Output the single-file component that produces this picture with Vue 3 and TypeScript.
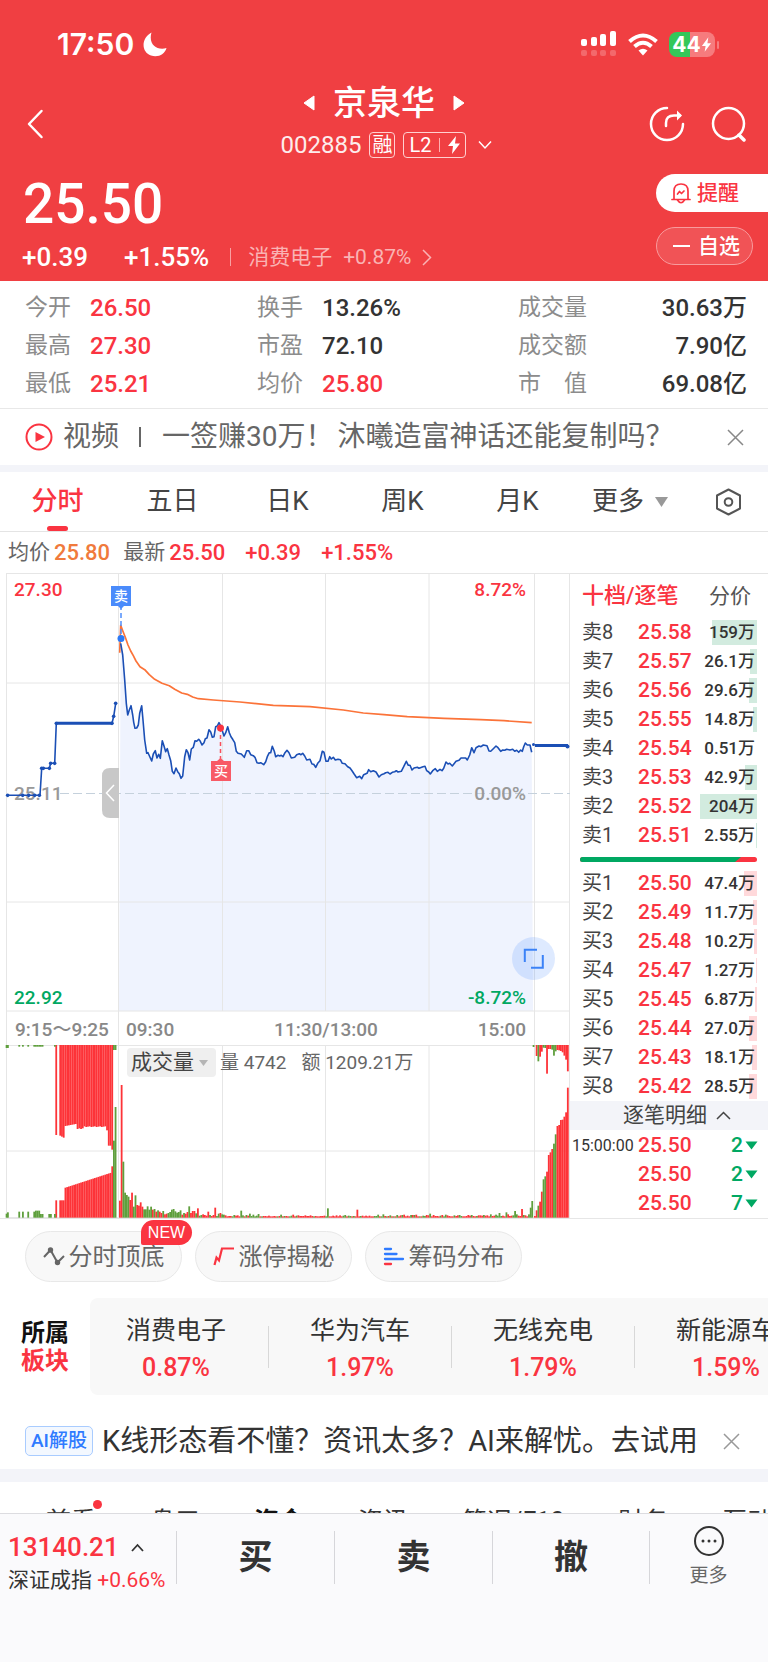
<script setup lang="ts">
import { ref } from 'vue'

type Point = [number, number]
type Tone = 'up' | 'down'

interface Stat { label: string; value: string; rise?: boolean }
interface Level { label: string; price: string; volume: string; bar: number }
interface Bar { x: number; y: number; h: number; tone: Tone }

const stats: Stat[] = [
  { label: '今开', value: '26.50', rise: true },
  { label: '换手', value: '13.26%' },
  { label: '成交量', value: '30.63万' },
  { label: '最高', value: '27.30', rise: true },
  { label: '市盈', value: '72.10' },
  { label: '成交额', value: '7.90亿' },
  { label: '最低', value: '25.21', rise: true },
  { label: '均价', value: '25.80', rise: true },
  { label: '市　值', value: '69.08亿' },
]

const periods = ['分时', '五日', '日K', '周K', '月K']
const activePeriod = ref('分时')

const asks: Level[] = [
  { label: '卖8', price: '25.58', volume: '159万', bar: 45 },
  { label: '卖7', price: '25.57', volume: '26.1万', bar: 7 },
  { label: '卖6', price: '25.56', volume: '29.6万', bar: 8 },
  { label: '卖5', price: '25.55', volume: '14.8万', bar: 4 },
  { label: '卖4', price: '25.54', volume: '0.51万', bar: 0 },
  { label: '卖3', price: '25.53', volume: '42.9万', bar: 12 },
  { label: '卖2', price: '25.52', volume: '204万', bar: 57 },
  { label: '卖1', price: '25.51', volume: '2.55万', bar: 1 },
]
const bids: Level[] = [
  { label: '买1', price: '25.50', volume: '47.4万', bar: 13 },
  { label: '买2', price: '25.49', volume: '11.7万', bar: 4 },
  { label: '买3', price: '25.48', volume: '10.2万', bar: 3 },
  { label: '买4', price: '25.47', volume: '1.27万', bar: 1 },
  { label: '买5', price: '25.45', volume: '6.87万', bar: 2 },
  { label: '买6', price: '25.44', volume: '27.0万', bar: 8 },
  { label: '买7', price: '25.43', volume: '18.1万', bar: 5 },
  { label: '买8', price: '25.42', volume: '28.5万', bar: 8 },
]
const trades = [
  { time: '15:00:00', price: '25.50', count: '2' },
  { time: '', price: '25.50', count: '2' },
  { time: '', price: '25.50', count: '7' },
]

const sectors = [
  { name: '消费电子', change: '0.87%' },
  { name: '华为汽车', change: '1.97%' },
  { name: '无线充电', change: '1.79%' },
  { name: '新能源车', change: '1.59%' },
]

const sections = ['首看', '盘口', '资金', '资讯', '简况/F10', '财务', '互动']

// Series are stored at three units per chart pixel.
const UNIT = 3
const OFFSET = 13

const toPoints = (list: Point[]): string =>
  list.map(([x, y]) => `${(x / UNIT).toFixed(1)},${(y / UNIT - OFFSET).toFixed(1)}`).join(' ')

const price: Point[] = [
  [362, 250], [368, 285], [374, 360], [379, 430], [383, 465], [388, 450], [393, 437], [398, 465], [401, 487],
  [405, 505], [410, 504], [415, 495], [419, 460], [425, 437], [429, 480], [434, 540], [440, 580], [444, 578],
  [450, 592], [455, 603], [460, 582], [466, 572], [471, 594], [476, 583], [481, 595], [487, 542], [492, 558],
  [497, 575], [502, 566], [507, 585], [512, 602], [517, 634], [522, 641], [528, 624], [533, 635], [538, 641],
  [543, 655], [548, 648], [554, 590], [559, 569], [564, 578], [569, 600], [574, 567], [580, 562], [585, 542],
  [590, 544], [596, 538], [601, 544], [606, 555], [612, 548], [616, 536], [621, 534], [627, 509], [632, 516],
  [637, 532], [642, 530], [647, 500], [652, 498], [657, 488], [662, 498], [667, 512], [672, 528], [677, 518],
  [683, 500], [688, 518], [693, 530], [698, 538], [704, 548], [709, 574], [714, 580], [724, 582], [733, 592],
  [740, 572], [746, 572], [752, 584], [760, 587], [765, 592], [771, 608], [777, 610], [782, 608], [791, 614],
  [797, 605], [802, 590], [808, 578], [812, 578], [817, 559], [823, 574], [827, 590], [834, 586], [839, 588],
  [844, 586], [849, 590], [855, 578], [861, 571], [867, 578], [874, 594], [884, 592], [890, 584], [898, 581],
  [903, 584], [908, 580], [914, 588], [920, 600], [930, 598], [936, 612], [941, 613], [947, 622], [953, 610],
  [960, 602], [967, 574], [972, 577], [978, 604], [984, 604], [989, 590], [994, 597], [1000, 592], [1006, 600],
  [1014, 598], [1021, 599], [1027, 610], [1035, 611], [1043, 620], [1050, 624], [1056, 632], [1063, 643],
  [1070, 653], [1079, 649], [1085, 656], [1091, 644], [1101, 640], [1106, 629], [1112, 635], [1120, 632],
  [1128, 636], [1137, 651], [1144, 644], [1152, 641], [1157, 638], [1164, 637], [1170, 642], [1177, 637],
  [1184, 635], [1189, 632], [1194, 636], [1204, 634], [1211, 620], [1219, 604], [1225, 616], [1230, 616],
  [1236, 630], [1242, 624], [1252, 622], [1257, 625], [1269, 620], [1275, 619], [1280, 632], [1286, 636],
  [1291, 642], [1298, 632], [1306, 626], [1312, 634], [1320, 628], [1326, 632], [1331, 625], [1338, 606],
  [1344, 612], [1349, 610], [1357, 618], [1368, 604], [1377, 601], [1383, 594], [1397, 594], [1402, 600],
  [1409, 585], [1415, 563], [1422, 578], [1428, 563], [1437, 558], [1443, 560], [1450, 555], [1461, 557],
  [1467, 573], [1472, 574], [1480, 566], [1488, 558], [1494, 563], [1502, 574], [1508, 570], [1514, 571],
  [1520, 568], [1530, 570], [1538, 568], [1544, 574], [1550, 571], [1556, 577], [1562, 570], [1567, 574],
  [1571, 560], [1576, 549], [1582, 555], [1590, 555], [1595, 577],
]
const average: Point[] = [
  [359, 278], [362, 196], [368, 212], [376, 232], [384, 255], [392, 273], [400, 287], [408, 303], [420, 320],
  [434, 329], [448, 344], [464, 358], [486, 370], [508, 377], [524, 388], [545, 399], [562, 403], [578, 411],
  [595, 416], [640, 420], [720, 426], [820, 436], [930, 440], [1030, 450], [1090, 459], [1152, 464], [1222, 470],
  [1332, 475], [1442, 479], [1512, 482], [1595, 488],
]
const auction: Point[] = [
  [20, 706], [120, 706], [125, 625], [148, 625], [152, 610], [164, 610], [169, 490], [336, 490], [341, 469], [347, 430],
]
const auctionDots: Point[] = [
  [23, 706], [68, 706], [86, 706], [104, 706], [118, 706], [125, 625], [130, 625], [148, 625], [152, 610],
  [164, 610], [169, 490], [336, 490], [341, 469], [347, 430],
]
const priceLine = toPoints(price)
const averageLine = toPoints(average)
const auctionLine = toPoints(auction)
const area = `119,438 ${priceLine} 533,438`
const dots = auctionDots.map(([x, y]) => ({ x: x / UNIT, y: y / UNIT - OFFSET }))

// Pseudo-random value in 0..1 for the thin mid-session volume bars.
const noise = (n: number): number => {
  const v = Math.sin(n * 127.1) * 43758.5453
  return v - Math.floor(v)
}

const BASE = 518
const fromBase = (x: number, h: number, tone: Tone): Bar => ({ x, y: BASE - h, h, tone })
const fromTop = (x: number, h: number, tone: Tone): Bar => ({ x, y: 0, h, tone })

const buildVolume = (): Bar[] => {
  const opening: [number, Tone][] = [
    [51, 'up'], [398, 'up'], [168, 'down'], [75, 'down'], [68, 'down'], [63, 'down'], [53, 'up'], [75, 'up'],
    [33, 'down'], [67, 'down'], [38, 'up'], [36, 'up'], [46, 'up'], [33, 'up'], [25, 'down'], [25, 'down'],
    [34, 'down'], [24, 'down'], [33, 'down'], [24, 'up'], [26, 'down'], [18, 'up'], [22, 'down'], [18, 'up'],
    [14, 'up'], [20, 'down'], [10, 'up'], [12, 'up'], [14, 'down'], [17, 'down'], [24, 'down'], [26, 'down'],
    [19, 'down'], [15, 'down'], [17, 'down'], [22, 'down'], [9, 'up'], [14, 'down'], [12, 'up'], [17, 'up'],
    [34, 'down'], [14, 'up'], [20, 'up'], [20, 'up'], [13, 'down'], [28, 'up'], [6, 'down'], [8, 'down'],
    [10, 'up'], [8, 'up'], [6, 'up'], [18, 'up'], [8, 'down'], [5, 'up'], [8, 'up'], [30, 'up'], [5, 'down'],
    [12, 'down'], [14, 'up'], [10, 'down'], [9, 'down'],
  ]
  const spikes: Record<number, number> = { 70: 21, 75: 12, 120: 28, 137: 24, 152: 10, 179: 12, 219: 14, 223: 16, 228: 20, 232: 26, 237: 30 }
  const bars = opening.map(([h, tone], i) => fromBase(357 + i * 5.2, h, tone))
  for (let i = opening.length; i < 238; i++) {
    const late = i > 210 ? (i - 210) / 4 : 0
    const h = spikes[i] ?? 4 + Math.floor(noise(i) * noise(i + 7) * 8 + noise(i + 3) * late)
    bars.push(fromBase(357 + i * 5.2, h, noise(i * 2 + 1) > (h > 7 ? 0.6 : 0.3) ? 'up' : 'down'))
  }
  for (let i = 0; i < 31; i++) {
    const x = 178 + i * 5.2
    const top = i < 3 ? 272 + i * 3 : i < 10 ? 243 - (i - 3) : i < 14 ? 252 - (i % 2) * 2 : i < 27 ? 246 - (i % 3) : i < 28 ? 256 : 302
    const low = i < 3 ? 52 : 90 + (i - 3) * 1.7
    bars.push(fromTop(x, i === 30 ? 314 : top, 'up'), fromBase(x, i === 30 ? 154 : low, 'up'))
  }
  bars.push(fromTop(166, 270, 'up'), fromBase(166, 52, 'up'))
  bars.push(fromTop(339, 15, 'down'), fromTop(344, 15, 'down'), fromBase(339, 231, 'down'), fromBase(344, 332, 'down'))
  for (const x of [55, 66, 82, 100, 105, 110, 115, 120, 125, 162]) bars.push(fromTop(x, 5, 'down'))
  for (const x of [17, 21]) bars.push(fromTop(x, 9, 'down'), fromBase(x, 12 + (x - 17), 'down'))
  for (const x of [55, 66, 82, 100, 105, 110, 115]) bars.push(fromBase(x, 18 + (x > 100 ? 3 : 0), 'down'))
  for (const x of [120, 125, 145, 150, 162]) bars.push(fromBase(x, 11, 'down'))
  const closing: [number, number, Tone, Tone][] = [
    [5, 0, 'up', 'down'], [22, 33, 'up', 'up'], [36, 49, 'down', 'down'], [48, 35, 'up', 'up'], [78, 20, 'up', 'up'],
    [115, 8, 'down', 'down'], [124, 9, 'down', 'down'], [138, 86, 'up', 'up'], [188, 12, 'up', 'up'], [196, 12, 'up', 'up'],
    [206, 14, 'up', 'down'], [222, 32, 'down', 'down'], [250, 19, 'down', 'down'], [275, 15, 'up', 'up'], [278, 16, 'up', 'up'],
    [293, 18, 'up', 'up'], [294, 22, 'up', 'up'], [303, 32, 'up', 'up'], [316, 44, 'up', 'up'], [390, 79, 'up', 'up'],
  ]
  closing.forEach(([h, t, tone, topTone], i) => {
    const x = 1602 + i * 5.2
    bars.push(fromBase(x, h, tone), fromTop(x, t, topTone))
  })
  bars.push(fromTop(1598, 6, 'down'), fromBase(1594, 50, 'down'))
  return bars
}
const volume = buildVolume()
</script>

<template>
  <div class="page">
    <header class="header">
      <div class="status">
        <div class="clock">
          <span>17:50</span>
          <svg width="24" height="25" viewBox="0 0 24 25" aria-hidden="true">
            <path d="M8.5 0.5C-2 6-2 20 8 23.500C15 26 22 22 23.500 16C14 19 5 12 8.500 0.500Z" fill="#fff" />
          </svg>
        </div>
        <div class="signals">
          <svg width="36" height="26" viewBox="0 0 36 26" aria-hidden="true">
            <g fill="#fff">
              <rect x="0" y="8" width="6" height="7" rx="2" /><rect x="10" y="6" width="6" height="9" rx="2" />
              <rect x="19" y="3" width="6" height="12" rx="2" /><rect x="29" y="0" width="6" height="15" rx="2" />
              <g opacity="0.22">
                <rect x="0" y="19" width="6" height="6" rx="2" /><rect x="10" y="19" width="6" height="6" rx="2" />
                <rect x="19" y="19" width="6" height="6" rx="2" /><rect x="29" y="19" width="6" height="6" rx="2" />
              </g>
            </g>
          </svg>
          <svg width="30" height="23" viewBox="0 0 30 23" aria-hidden="true">
            <g fill="none" stroke="#fff" stroke-width="4">
              <path d="M1.500 8.500Q15-3.500 28.500 8.500" /><path d="M6.500 13.500Q15 6 23.500 13.500" />
            </g>
            <path d="M10.500 17.500Q15 14 19.500 17.500L15 22.500Z" fill="#fff" />
          </svg>
          <div class="battery"><span>44</span>
            <svg width="11" height="17" viewBox="0 0 12 18" aria-hidden="true"><path d="M8 1 1 10.500H5L4 17 11 7.500H7Z" fill="#fff" /></svg>
          </div>
        </div>
      </div>

      <nav class="nav">
        <button class="plain side" aria-label="返回">
          <svg width="18" height="30" viewBox="0 0 18 30"><path d="M15.500 2 3 15 15.500 28" fill="none" stroke="#fff" stroke-width="2.500" stroke-linecap="round" stroke-linejoin="round" /></svg>
        </button>
        <div class="title">
          <div class="name-row">
            <button class="plain" aria-label="上一只"><svg width="12" height="16" viewBox="0 0 12 16"><path d="M11 1V15L1 8Z" fill="#fff" stroke="#fff" stroke-linejoin="round" /></svg></button>
            <h1>京泉华</h1>
            <button class="plain" aria-label="下一只"><svg width="12" height="16" viewBox="0 0 12 16"><path d="M1 1V15L11 8Z" fill="#fff" stroke="#fff" stroke-linejoin="round" /></svg></button>
          </div>
          <div class="code-row">
            <span class="code">002885</span>
            <span class="tag">融</span>
            <span class="tag level">L2<i></i>
              <svg width="12" height="18" viewBox="0 0 12 18" aria-hidden="true"><path d="M8 0 0 10H5L4 18 12 7.500H7Z" fill="#fff" /></svg>
            </span>
            <button class="plain chevron" aria-label="展开"><svg width="14" height="10" viewBox="0 0 14 10"><path d="M1 1.500 7 8 13 1.500" fill="none" stroke="#fff" stroke-width="1.500" /></svg></button>
          </div>
        </div>
        <div class="side tools">
          <button class="plain" aria-label="分享">
            <svg width="36" height="36" viewBox="0 0 36 36"><g fill="none" stroke="#fff" stroke-width="2.500" stroke-linecap="round" stroke-linejoin="round"><path d="M18 2A16 16 0 1 0 34 18" /><path d="M17 20V17Q17 9.500 25 9.500H31" /></g><path d="M28 4.500 33 9.500 28 14.500Z" fill="#fff" /></svg>
          </button>
          <button class="plain" aria-label="搜索">
            <svg width="36" height="36" viewBox="0 0 36 36"><g fill="none" stroke="#fff" stroke-width="2.500" stroke-linecap="round"><circle cx="17.500" cy="17.500" r="15.500" /><path d="M28 29 33 34" stroke-width="3.500" /></g></svg>
          </button>
        </div>
      </nav>

      <div class="quote">
        <div>
          <div class="last">25.50</div>
          <div class="change">
            <span>+0.39</span><span class="pct">+1.55%</span><i></i>
            <a href="#sector">消费电子 <span>+0.87%</span>
              <svg width="10" height="17" viewBox="0 0 10 17" aria-hidden="true"><path d="M1 1 8.500 8.500 1 16" fill="none" stroke="currentColor" stroke-width="1.500" /></svg>
            </a>
          </div>
        </div>
        <div class="actions">
          <button class="remind">
            <svg width="20" height="21" viewBox="0 0 20 21" aria-hidden="true"><g fill="none" stroke="#fa3441" stroke-width="1.700" stroke-linecap="round" stroke-linejoin="round"><path d="M1 16.500H19" /><path d="M3 16V8Q3 1 10 1T17 8V16" /><path d="M6.500 17Q10 22.500 13.500 17" /><path d="M6.500 11 8.500 8.500 10.500 10.500 13 8" /></g></svg>
            提醒
          </button>
          <button class="watch"><i></i>自选</button>
        </div>
      </div>
    </header>

    <dl class="stats">
      <div v-for="s in stats" :key="s.label"><dt>{{ s.label }}</dt><dd :class="{ rise: s.rise }">{{ s.value }}</dd></div>
    </dl>

    <div class="news">
      <svg width="28" height="28" viewBox="0 0 28 28" aria-hidden="true"><circle cx="14" cy="14" r="12.500" fill="none" stroke="#fa3441" stroke-width="2" /><path d="M10.500 9 20 14 10.500 19Z" fill="#fa3441" /></svg>
      <a href="#video"><span>视频</span><i></i><span>一签赚30万！</span><span class="next">沐曦造富神话还能复制吗？</span></a>
      <button class="plain" aria-label="关闭"><svg width="17" height="17" viewBox="0 0 17 17"><path d="M1 1 16 16M16 1 1 16" stroke="#888" stroke-width="1.500" /></svg></button>
    </div>

    <div class="periods">
      <button v-for="p in periods" :key="p" :class="{ active: p === activePeriod }" @click="activePeriod = p">{{ p }}</button>
      <button>更多<svg width="13" height="10" viewBox="0 0 13 10" aria-hidden="true"><path d="M0 0H13L6.500 10Z" fill="#999" /></svg></button>
      <button class="settings" aria-label="设置"><svg width="27" height="28" viewBox="0 0 27 28"><g fill="none" stroke="#555" stroke-width="2" stroke-linejoin="round"><path d="M13.500 1.500 25 7.500V20.500L13.500 26.500 2 20.500V7.500Z" /><circle cx="13.500" cy="14" r="3.800" /></g></svg></button>
    </div>

    <div class="legend">
      <span class="key">均价</span><span class="avg">25.80</span>
      <span class="key second">最新</span><span>25.50</span>
      <span class="gap">+0.39</span><span class="gap">+1.55%</span>
    </div>

    <main class="market">
      <div class="charts">
        <svg class="chart" viewBox="0 0 570 472" role="img" aria-label="分时走势">
          <polygon :points="area" fill="#eff3fe" />
          <g stroke="#e6e6e6" fill="none" stroke-width="1">
            <path d="M6 .5H570M6 110H570M6 329H570M6 438H570M6.500 0V472M118.500 0V472M222.500 0V438M325.500 0V438M429 0V438M534.500 0V472M569.500 0V472" />
          </g>
          <path d="M60 220.500H570" stroke="#c5d1dc" stroke-dasharray="9 4" />
          <g class="axis">
            <text x="14" y="23" fill="#fa3441">27.30</text>
            <text x="526" y="23" text-anchor="end" fill="#fa3441">8.72%</text>
            <text x="14" y="227" fill="#999">25.11</text>
            <text x="526" y="227" text-anchor="end" fill="#999">0.00%</text>
            <text x="14" y="431" fill="#00a862">22.92</text>
            <text x="526" y="431" text-anchor="end" fill="#00a862">-8.72%</text>
            <g fill="#888">
              <text x="15" y="463">9:15～9:25</text>
              <text x="126" y="463">09:30</text>
              <text x="326" y="463" text-anchor="middle">11:30/13:00</text>
              <text x="526" y="463" text-anchor="end">15:00</text>
            </g>
          </g>
          <polyline :points="averageLine" fill="none" stroke="#fb7339" stroke-width="1.700" stroke-linejoin="round" />
          <g fill="none" stroke="#1b4fb5" stroke-width="1.600" stroke-linejoin="round">
            <polyline :points="priceLine" />
            <polyline :points="auctionLine" />
            <path d="M57 150.300H112M535 172.500H568" stroke-width="3" />
          </g>
          <circle v-for="(d, i) in dots" :key="i" :cx="d.x" :cy="d.y" r="1.800" fill="#1b4fb5" />
          <circle cx="533.500" cy="171.500" r="1.500" fill="#1b4fb5" /><circle cx="567.500" cy="173.500" r="2" fill="#1b4fb5" />
          <path d="M121 32V65" stroke="#4f8ffb" stroke-width="1.500" stroke-dasharray="5 3" />
          <path d="M111 13H131V33H124L121 36 118 33H111Z" fill="#4a8bfb" />
          <circle cx="121" cy="65.500" r="3.500" fill="#2b79f7" />
          <path d="M220.500 155V188" stroke="#f8505c" stroke-width="1.500" stroke-dasharray="4 3" />
          <path d="M211 188H217L220.500 185 224 188H231V208H211Z" fill="#f85a66" />
          <circle cx="220.500" cy="155" r="3.500" fill="#fa3441" />
          <g class="mark"><text x="121" y="28">卖</text><text x="221" y="203">买</text></g>
          <path d="M119 195H110Q102 195 102 203V237Q102 245 110 245H119Z" fill="#c8c8c8" />
          <path d="M114 212 106.500 220 114 228" fill="none" stroke="#fff" stroke-width="1.500" />
          <circle cx="533.500" cy="385.500" r="21.500" fill="#2f7bff" fill-opacity="0.160" />
          <path d="M524.800 389V376.800H537M531 394.800H542.800V382" fill="none" stroke="#3b82f7" stroke-width="2" />
        </svg>
        <div class="volume">
          <svg class="chart" viewBox="0 0 570 173" role="img" aria-label="成交量">
            <path d="M6 .5H570M6 106H570M6 172.500H570M6.500 0V173M118.500 0V173M222.500 0V173M325.500 0V173M429 0V173M534.500 0V173M569.500 0V173" stroke="#e6e6e6" fill="none" />
            <g transform="scale(0.33333)">
              <rect v-for="(b, i) in volume" :key="i" :x="b.x" :y="b.y" width="5.400" :height="b.h" :fill="b.tone === 'up' ? '#fd3338' : '#5f9f3d'" />
            </g>
          </svg>
          <div class="indicator">
            <button>成交量<svg width="9" height="6" viewBox="0 0 9 6" aria-hidden="true"><path d="M0 0H9L4.500 6Z" fill="#b5b5b5" /></svg></button>
            <span>量 4742</span><span>额 1209.21万</span>
          </div>
        </div>
      </div>

      <aside class="book">
        <div class="book-tabs"><button class="on">十档/逐笔</button><button>分价</button></div>
        <table>
          <tbody>
            <tr v-for="l in asks" :key="l.label">
              <th scope="row">{{ l.label }}</th><td class="price">{{ l.price }}</td>
              <td class="qty"><i class="sell" :style="{ width: l.bar + 'px' }"></i><span>{{ l.volume }}</span></td>
            </tr>
          </tbody>
        </table>
        <div class="ratio"><svg viewBox="0 0 177 5" aria-hidden="true"><rect width="177" height="5" rx="2.500" fill="#fa3441" /><path d="M2.500 0H161L155 5H2.500A2.500 2.500 0 0 1 2.500 0Z" fill="#00a862" /></svg></div>
        <table>
          <tbody>
            <tr v-for="l in bids" :key="l.label">
              <th scope="row">{{ l.label }}</th><td class="price">{{ l.price }}</td>
              <td class="qty"><i class="buy" :style="{ width: l.bar + 'px' }"></i><span>{{ l.volume }}</span></td>
            </tr>
          </tbody>
        </table>
        <button class="detail">逐笔明细<svg width="15" height="9" viewBox="0 0 15 9" aria-hidden="true"><path d="M1 8 7.500 1.500 14 8" fill="none" stroke="#444" stroke-width="1.500" /></svg></button>
        <table class="trades">
          <tbody>
            <tr v-for="(t, i) in trades" :key="i">
              <td class="time">{{ t.time }}</td><td class="price">{{ t.price }}</td>
              <td class="count">{{ t.count }}<svg width="13" height="9" viewBox="0 0 13 9" aria-hidden="true"><path d="M0.500 0.500H12.500L6.500 8.500Z" fill="#00a862" /></svg></td>
            </tr>
          </tbody>
        </table>
      </aside>
    </main>

    <div class="chips">
      <button>
        <svg width="22" height="19" viewBox="0 0 22 19" aria-hidden="true"><path d="M1 10 7.500 3 14.500 15.500 21 9" fill="none" stroke="#666" stroke-width="2" /><circle cx="7.500" cy="3" r="2.700" fill="#666" /><circle cx="14.500" cy="15.500" r="2.700" fill="#666" /></svg>
        分时顶底<b>NEW</b>
      </button>
      <button>
        <svg width="22" height="19" viewBox="0 0 22 19" aria-hidden="true"><path d="M1.500 18 3.500 10.500 6 13.500 9 1.500H21" fill="none" stroke="#fa3441" stroke-width="2.200" /></svg>
        涨停揭秘
      </button>
      <button>
        <svg width="22" height="19" viewBox="0 0 22 19" aria-hidden="true"><path d="M2 2H8M2 7H13.500M2 12H20" stroke="#2f7bff" stroke-width="2.300" stroke-linecap="round" /><path d="M2 17H8" stroke="#fa3441" stroke-width="2.300" stroke-linecap="round" /></svg>
        筹码分布
      </button>
    </div>

    <section id="sector" class="sectors">
      <h2>所属<br /><em>板块</em></h2>
      <ul>
        <li v-for="s in sectors" :key="s.name"><a href="#sector"><span>{{ s.name }}</span><strong>{{ s.change }}</strong></a></li>
      </ul>
    </section>

    <div class="assistant">
      <span class="badge">AI解股</span>
      <a href="#ai">K线形态看不懂？资讯太多？AI来解忧。去试用</a>
      <button class="plain" aria-label="关闭"><svg width="17" height="17" viewBox="0 0 17 17"><path d="M1 1 16 16M16 1 1 16" stroke="#999" stroke-width="1.500" /></svg></button>
    </div>

    <div class="sections">
      <button v-for="(s, i) in sections" :key="s" :class="{ current: s === '资金' }">{{ s }}<i v-if="i === 0"></i></button>
    </div>

    <footer class="bar">
      <div class="index">
        <div class="points">13140.21<svg width="13" height="9" viewBox="0 0 13 9" aria-hidden="true"><path d="M1 8 6.500 2 12 8" fill="none" stroke="#333" stroke-width="1.800" /></svg></div>
        <div class="index-name">深证成指 <span>+0.66%</span></div>
      </div>
      <button class="order">买</button>
      <button class="order">卖</button>
      <button class="order">撤</button>
      <button class="more">
        <svg width="32" height="32" viewBox="0 0 32 32" aria-hidden="true"><circle cx="16" cy="16" r="14" fill="none" stroke="#333" stroke-width="2" /><g fill="#333"><circle cx="10" cy="16" r="1.500" /><circle cx="16" cy="16" r="1.500" /><circle cx="22" cy="16" r="1.500" /></g></svg>
        更多
      </button>
    </footer>
  </div>
</template>

<style>
body { background: #fafafc; }
</style>

<style scoped>
.page {
  font-family: Roboto, "Noto Sans CJK SC", sans-serif;
  line-height: 1.25;
  color: #333;
  background: #fff;
  overflow: hidden;
}
.page *, .page { box-sizing: border-box; }
button { font: inherit; color: inherit; background: none; border: 0; padding: 0; cursor: pointer; }
a { color: inherit; text-decoration: none; }
svg { display: block; flex: none; }
i, em { font-style: normal; }
.plain { display: flex; align-items: center; justify-content: center; }

.header { background: #f03f42; color: #fff; }
.status { display: flex; justify-content: space-between; align-items: center; height: 82px; padding: 6px 53px 0 57px; }
.clock { display: flex; align-items: center; gap: 9px; font: 600 30px/36px Inter, sans-serif; }
.signals { display: flex; align-items: center; gap: 11px; }
.battery {
  position: relative; display: flex; align-items: center; justify-content: center; width: 46px; height: 25px;
  border-radius: 8px; font: 700 21px/25px Inter, sans-serif;
  background: linear-gradient(90deg, #34c759 45%, #f67b7d 45%);
}
.battery::after { content: ""; position: absolute; right: -4px; top: 9px; width: 2px; height: 8px; border-radius: 2px; background: #f67b7d; }

.nav { display: grid; grid-template-columns: 110px 1fr 110px; height: 78px; }
.side { align-self: end; height: 72px; display: flex; align-items: center; }
.nav > .plain.side { justify-content: flex-start; padding-left: 26px; }
.tools { justify-content: flex-end; gap: 26px; padding-right: 21px; }
.title { display: flex; flex-direction: column; align-items: center; padding-top: 1px; }
.name-row { display: flex; align-items: center; gap: 18px; height: 40px; }
h1 { margin: 0; font-size: 34px; font-weight: 500; line-height: 40px; }
.code-row { display: flex; align-items: center; gap: 8px; height: 30px; margin-top: 7px; padding-left: 5px; }
.code { font-size: 24px; line-height: 30px; opacity: 0.9; }
.tag { display: flex; align-items: center; justify-content: center; height: 26px; min-width: 26px; border: 1px solid #ffd0d0; border-radius: 4px; font-size: 20px; line-height: 24px; }
.level { gap: 8px; width: 63px; }
.level i { width: 1px; height: 14px; background: #ffb0b0; }
.chevron { margin-left: 4px; }

.quote { display: flex; justify-content: space-between; height: 121px; }
.last { margin: 20px 0 16px 23px; font-size: 55px; font-weight: 500; line-height: 48px; }
.change { display: flex; align-items: center; padding-left: 22px; font-size: 26px; font-weight: 500; line-height: 26px; }
.pct { margin-left: 36px; }
.change i { width: 1px; height: 18px; margin: 0 17px 0 21px; background: #f9a0a2; }
.change a { display: flex; align-items: center; gap: 11px; font-size: 21px; font-weight: 400; color: #fab3b4; }
.actions { display: flex; flex-direction: column; gap: 15px; padding-top: 14px; }
.actions button { display: flex; align-items: center; height: 38px; font-size: 21px; line-height: 36px; font-weight: 500; }
.remind { width: 112px; padding-left: 15px; gap: 6px; border-radius: 19px 0 0 19px; background: #fff; color: #fa3441; }
.watch { width: 97px; padding-left: 16px; gap: 8px; border: 1px solid #f89b9d; border-radius: 19px; background: #f15356; }
.watch i { width: 17px; height: 2px; background: #fff; }

.stats { display: grid; grid-template-columns: 232fr 261fr 229fr; grid-auto-rows: 38px; margin: 0; padding: 8px 21px 5px 25px; border-bottom: 1px solid #e8e8e8; }
.stats div { display: flex; align-items: center; line-height: 38px; }
.stats div:nth-child(3n) { justify-content: space-between; }
dt { min-width: 65px; font-size: 23px; color: #8c8c8c; }
dd { margin: 0; font-size: 24px; font-weight: 500; }
.rise { color: #fa3441; }

.news { display: flex; align-items: center; height: 56px; padding: 0 24px 0 25px; font-size: 28px; color: #666; }
.news a { flex: 1; display: flex; align-items: center; margin-left: 10px; line-height: 42px; white-space: nowrap; }
.news i { width: 2px; height: 20px; margin: 0 21px 0 20px; background: #666; }
.news .next { margin-left: 4px; }

.periods { display: grid; grid-template-columns: repeat(5, 115fr) 110fr 83fr; height: 67px; border-top: 7px solid #f3f4f9; border-bottom: 1px solid #e4e4e4; }
.periods button { position: relative; display: flex; align-items: center; justify-content: center; gap: 11px; font-size: 26px; color: #444; }
.periods .settings { padding-left: 4px; }
.periods .active { color: #fa3441; font-weight: 500; }
.active::after { content: ""; position: absolute; bottom: 0; width: 21px; height: 5px; border-radius: 3px; background: #fa3441; }

.legend { display: flex; align-items: center; height: 41px; padding-left: 8px; font-size: 22px; font-weight: 500; color: #fa3441; }
.key { margin-right: 4px; font-size: 21px; font-weight: 400; color: #666; }
.second { margin-left: 13px; }
.avg { color: #f07a3c; }
.gap { margin-left: 20px; }

.market { display: grid; grid-template-columns: minmax(0, 1fr) 198px; border-bottom: 1px solid #e6e6e6; }
.chart { width: 100%; height: auto; }
.axis { font-size: 19px; font-weight: 500; }
.mark { font-size: 14px; font-weight: 500; fill: #fff; text-anchor: middle; }
.volume { position: relative; }
.indicator { position: absolute; left: 127px; top: 3px; display: flex; align-items: center; font-size: 19px; line-height: 28px; color: #666; }
.indicator button { display: flex; align-items: center; gap: 5px; height: 29px; padding: 0 8px 0 4px; border-radius: 4px; font-size: 21px; line-height: 29px; color: #444; background: #efefef; }
.indicator span { margin-left: 4px; }
.indicator span + span { margin-left: 15px; }

.book { border-top: 1px solid #e4e4e4; }
.book-tabs { display: flex; justify-content: space-between; height: 44px; padding: 0 17px 0 12px; font-size: 21px; color: #555; }
.book-tabs .on { font-size: 22px; font-weight: 500; color: #fa3441; }
table { width: 100%; table-layout: fixed; border-collapse: collapse; }
tr { height: 29px; }
th, td { height: 29px; padding: 0; line-height: 29px; white-space: nowrap; }
th { width: 68px; padding-left: 12px; font-size: 20px; font-weight: 400; text-align: left; color: #444; }
.price { width: 57px; font-size: 21px; font-weight: 500; color: #fa3441; }
.qty { position: relative; padding-right: 13px; font-size: 17px; font-weight: 500; text-align: right; }
.qty span { position: relative; }
.qty i { position: absolute; right: 11px; top: 2px; height: 25px; }
.sell { background: #d2ebdf; }
.buy { background: #ffd9db; }
.ratio { height: 19px; padding: 7px 11px 0 10px; }
.ratio svg { width: 100%; height: 5px; }
.detail { display: flex; align-items: center; justify-content: center; gap: 9px; width: 100%; height: 29px; padding-left: 16px; font-size: 21px; line-height: 29px; color: #444; background: #f3f4f9; }
.trades { margin-top: 1px; }
.trades td { vertical-align: bottom; }
.time { width: 68px; padding-left: 2px; font-size: 16px; }
.count { padding-right: 10px; font-size: 21px; font-weight: 500; text-align: right; color: #00a862; }
.count svg { display: inline-block; margin-left: 2px; vertical-align: 2px; }

.chips { display: flex; gap: 13px; padding: 12px 25px 0; }
.chips button { position: relative; display: flex; align-items: center; justify-content: center; gap: 4px; width: 157px; height: 51px; border: 1px solid #e8e8e8; border-radius: 26px; font-size: 24px; color: #666; background: #f8f8f8; }
.chips b { position: absolute; right: -11px; top: -12px; width: 51px; border-radius: 13px 13px 13px 2px; font: 400 16px/25px "Liberation Sans", sans-serif; color: #fff; background: #fa3441; }

.sectors { display: flex; align-items: center; margin-top: 16px; overflow: hidden; }
h2 { flex: none; width: 90px; margin: 0; padding-left: 21px; font-size: 24px; line-height: 28px; font-weight: 700; color: #111; }
h2 em { color: #fa3441; }
ul { display: flex; flex: none; margin: 0; padding: 0; list-style: none; background: #f8f8f8; border-radius: 8px; height: 97px; }
li { flex: none; width: 183px; display: flex; align-items: center; }
li:first-child { width: 178px; padding-right: 6px; }
li a { flex: 1; display: flex; flex-direction: column; align-items: center; padding-top: 4px; font-size: 25px; line-height: 37px; }
li strong { font-weight: 500; color: #fa3441; }
li + li::before { content: ""; width: 1px; height: 42px; background: #d8d8d8; }

.assistant { display: flex; align-items: center; height: 74px; padding: 18px 28px 0 25px; }
.badge { width: 68px; height: 30px; border: 1px solid #a9ccff; border-radius: 5px; font-size: 19px; line-height: 28px; text-align: center; color: #2f7bff; background: #f3f8ff; font-weight: 500; white-space: nowrap; }
.assistant a { flex: 1; margin-left: 9px; font-size: 29px; line-height: 42px; white-space: nowrap; }

.sections { display: flex; align-items: flex-start; gap: 54px; height: 44px; padding: 22px 0 0 46px; overflow: hidden; border-top: 13px solid #f3f4f9; font-size: 25px; line-height: 36px; }
.sections button { position: relative; flex: none; }
.current { font-weight: 700; color: #111; }
.sections i { position: absolute; right: -6px; top: -4px; width: 9px; height: 9px; border-radius: 50%; background: #fa3441; }

.bar { display: grid; grid-template-columns: 176fr 158fr 158fr 157fr 119fr; align-items: start; padding: 11px 0 66px; border-top: 1px solid #dcdce0; background: #fafafc; position: relative; }
.bar > * + * { border-left: 1px solid #d6d6da; }
.index { padding: 6px 0 0 8px; line-height: 33px; white-space: nowrap; }
.points { display: flex; align-items: center; gap: 12px; font-size: 26px; font-weight: 500; color: #fa3441; }
.index-name { font-size: 21px; }
.index-name span { color: #fa3441; }
.order { height: 53px; margin-top: 6px; font-size: 34px; line-height: 53px; font-weight: 700; }
.bar .more { display: flex; flex-direction: column; align-items: center; border-left: 0; font-size: 19px; line-height: 22px; gap: 8px; color: #666; }
.order + .more::before { content: ""; position: absolute; left: calc(100% * 649 / 768); top: 17px; width: 1px; height: 53px; background: #d6d6da; }
</style>
